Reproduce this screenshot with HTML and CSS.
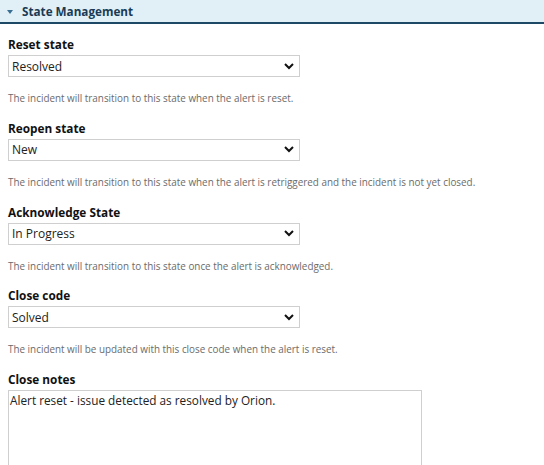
FILE: index.html
```html
<!DOCTYPE html>
<html>
<head>
<meta charset="utf-8">
<link rel="stylesheet" href="styles.css">
</head>
<body>
<div class="section-header">
  <span class="caret"></span>
  <span class="section-title">State Management</span>
</div>
<div class="content">
  <div class="field">
    <div class="label">Reset state</div>
    <div class="select"><span>Resolved</span><svg class="chev" viewBox="0 0 10 7" width="10" height="7"><path d="M1 1 L5 5 L9 1" fill="none" stroke="#111" stroke-width="2"/></svg></div>
    <div class="help">The incident will transition to this state when the alert is reset.</div>
  </div>
  <div class="field">
    <div class="label">Reopen state</div>
    <div class="select"><span>New</span><svg class="chev" viewBox="0 0 10 7" width="10" height="7"><path d="M1 1 L5 5 L9 1" fill="none" stroke="#111" stroke-width="2"/></svg></div>
    <div class="help">The incident will transition to this state when the alert is retriggered and the incident is not yet closed.</div>
  </div>
  <div class="field">
    <div class="label">Acknowledge State</div>
    <div class="select"><span>In Progress</span><svg class="chev" viewBox="0 0 10 7" width="10" height="7"><path d="M1 1 L5 5 L9 1" fill="none" stroke="#111" stroke-width="2"/></svg></div>
    <div class="help">The incident will transition to this state once the alert is acknowledged.</div>
  </div>
  <div class="field">
    <div class="label">Close code</div>
    <div class="select"><span>Solved</span><svg class="chev" viewBox="0 0 10 7" width="10" height="7"><path d="M1 1 L5 5 L9 1" fill="none" stroke="#111" stroke-width="2"/></svg></div>
    <div class="help">The incident will be updated with this close code when the alert is reset.</div>
  </div>
  <div class="field">
    <div class="label">Close notes</div>
    <div class="textarea">Alert reset - issue detected as resolved by Orion.</div>
  </div>
</div>
</body>
</html>
```

FILE: styles.css
```css
html, body {
  margin: 0;
  padding: 0;
  background: #fff;
  font-family: "Open Sans", "Noto Sans", sans-serif;
  color: #111;
  overflow: hidden;
}
.section-header {
  height: 22px;
  background: #e1f0f6;
  border-bottom: 2px solid #1d4866;
  display: flex;
  align-items: center;
  padding-left: 7px;
}
.caret {
  width: 0;
  height: 0;
  border-left: 3.5px solid transparent;
  border-right: 3.5px solid transparent;
  border-top: 4px solid #3a6f93;
  margin-right: 9px;
  margin-top: 1px;
}
.section-title {
  font-weight: 700;
  font-size: 11.7px;
  color: #1a3b55;
}
.content {
  padding: 12px 8px 0 8px;
}
.field {
  margin-bottom: 14.8px;
}
.label {
  font-weight: 700;
  font-size: 11.8px;
  line-height: 16px;
  margin-bottom: 3px;
  color: #111;
}
.select {
  box-sizing: border-box;
  width: 292px;
  height: 22px;
  border: 1px solid #cfcfcf;
  display: flex;
  align-items: center;
  justify-content: space-between;
  padding: 0 4px 0 3px;
  font-size: 12px;
  color: #222;
}
.chev {
  margin-right: 1px;
}
.help {
  margin-top: 14px;
  font-size: 9.9px;
  line-height: 14px;
  color: #6b6b6b;
}
.textarea {
  box-sizing: border-box;
  width: 414px;
  height: 100px;
  border: 1px solid #cfcfcf;
  padding: 0 1px;
  font-size: 11.8px;
  line-height: 18px;
  color: #222;
}
```
